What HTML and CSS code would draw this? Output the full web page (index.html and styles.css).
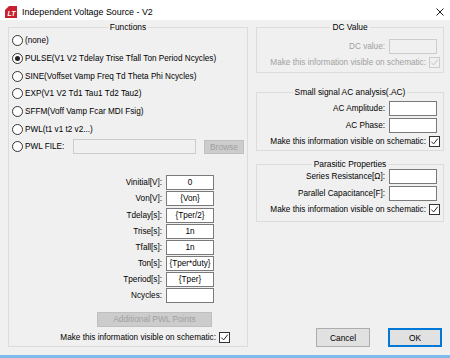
FILE: index.html
```html
<!DOCTYPE html>
<html lang="en">
<head>
    <meta charset="UTF-8">
    <title>Independent Voltage Source - V2</title>
    <link rel="stylesheet" href="styles.css">
</head>
<body>
    <div class="window">
        <div class="titlebar">
            <svg class="app-icon" viewBox="0 0 12 12">
                <polygon points="0,0 12,0 12,12 0,12" fill="#c9202f"/>
                <polygon points="0,0 4,0 0,4" fill="#ffffff"/>
                <text x="6.4" y="9.6" text-anchor="middle" class="icon-text">LT</text>
            </svg>
            <span class="title">Independent Voltage Source - V2</span>
            <svg class="close" viewBox="0 0 8 8">
                <path d="M0.5 0.5 L7.5 7.5 M7.5 0.5 L0.5 7.5" stroke="#000" stroke-width="0.9" fill="none"/>
            </svg>
        </div>

        <div class="content">
            <fieldset class="group functions">
                <legend align="center">Functions</legend>
                <div class="group-body">
                    <div class="options">
                        <div class="option"><span class="radio"></span>(none)</div>
                        <div class="option"><span class="radio on"></span>PULSE(V1 V2 Tdelay Trise Tfall Ton Period Ncycles)</div>
                        <div class="option"><span class="radio"></span>SINE(Voffset Vamp Freq Td Theta Phi Ncycles)</div>
                        <div class="option"><span class="radio"></span>EXP(V1 V2 Td1 Tau1 Td2 Tau2)</div>
                        <div class="option"><span class="radio"></span>SFFM(Voff Vamp Fcar MDI Fsig)</div>
                        <div class="option"><span class="radio"></span>PWL(t1 v1 t2 v2...)</div>
                        <div class="option">
                            <span class="radio"></span>
                            <span class="file-label">PWL FILE:</span>
                            <input class="text-input file-input" disabled>
                            <button class="btn browse" disabled>Browse</button>
                        </div>
                    </div>

                    <div class="params">
                        <div class="param"><label>Vinitial[V]:</label><input class="text-input" value="0"></div>
                        <div class="param"><label>Von[V]:</label><input class="text-input" value="{Von}"></div>
                        <div class="param"><label>Tdelay[s]:</label><input class="text-input" value="{Tper/2}"></div>
                        <div class="param"><label>Trise[s]:</label><input class="text-input" value="1n"></div>
                        <div class="param"><label>Tfall[s]:</label><input class="text-input" value="1n"></div>
                        <div class="param"><label>Ton[s]:</label><input class="text-input" value="{Tper*duty}"></div>
                        <div class="param"><label>Tperiod[s]:</label><input class="text-input" value="{Tper}"></div>
                        <div class="param"><label>Ncycles:</label><input class="text-input" value=""></div>
                    </div>

                    <button class="btn pwl-points" disabled>Additional PWL Points</button>

                    <div class="check-row left-check">
                        <span>Make this information visible on schematic:</span>
                        <span class="check"><svg viewBox="0 0 9 9"><path d="M1.3 4.6 L3.6 6.9 L7.8 1.6" stroke="#222" stroke-width="1" fill="none"/></svg></span>
                    </div>
                </div>
            </fieldset>

            <div class="side">
                <fieldset class="group dc">
                    <legend align="center">DC Value</legend>
                    <div class="group-body">
                        <div class="field first disabled-text"><label>DC value:</label><input class="text-input" disabled></div>
                        <div class="check-row disabled-text">
                            <span>Make this information visible on schematic:</span>
                            <span class="check off"><svg viewBox="0 0 9 9"><path d="M1.3 4.6 L3.6 6.9 L7.8 1.6" stroke="#c4c4c4" stroke-width="1" fill="none"/></svg></span>
                        </div>
                    </div>
                </fieldset>

                <fieldset class="group ac">
                    <legend align="center">Small signal AC analysis(.AC)</legend>
                    <div class="group-body">
                        <div class="field first"><label>AC Amplitude:</label><input class="text-input"></div>
                        <div class="field"><label>AC Phase:</label><input class="text-input"></div>
                        <div class="check-row">
                            <span>Make this information visible on schematic:</span>
                            <span class="check"><svg viewBox="0 0 9 9"><path d="M1.3 4.6 L3.6 6.9 L7.8 1.6" stroke="#222" stroke-width="1" fill="none"/></svg></span>
                        </div>
                    </div>
                </fieldset>

                <fieldset class="group parasitic">
                    <legend align="center">Parasitic Properties</legend>
                    <div class="group-body">
                        <div class="field"><label>Series Resistance[Ω]:</label><input class="text-input"></div>
                        <div class="field"><label>Parallel Capacitance[F]:</label><input class="text-input"></div>
                        <div class="check-row">
                            <span>Make this information visible on schematic:</span>
                            <span class="check"><svg viewBox="0 0 9 9"><path d="M1.3 4.6 L3.6 6.9 L7.8 1.6" stroke="#222" stroke-width="1" fill="none"/></svg></span>
                        </div>
                    </div>
                </fieldset>

                <div class="buttons">
                    <button class="btn">Cancel</button>
                    <button class="btn default">OK</button>
                </div>
            </div>
        </div>
    </div>
</body>
</html>
```

FILE: styles.css
```css
*{
    font-family: "Liberation Sans", Arial, sans-serif;
    margin: 0;
    padding: 0;
    box-sizing: border-box;
}
body {
    width: 450px;
    height: 358px;
    overflow: hidden;
    background-color: #f0f0f0;
    color: #000;
    font-size: 8.2px;
}
.window {
    display: flex;
    flex-direction: column;
    height: 358px;
    border-bottom: 3px solid #7cbbea;
}
.titlebar {
    height: 20px;
    background-color: #fff;
    display: flex;
    align-items: center;
    padding: 3px 6px 0 5px;
}
.app-icon {
    width: 12px;
    height: 12px;
    margin-right: 5px;
}
.icon-text {
    font-size: 7px;
    font-weight: bold;
    font-style: italic;
    fill: #fff;
}
.title {
    flex: 1;
    font-size: 8.9px;
}
.close {
    width: 8px;
    height: 8px;
}
.content {
    flex: 1;
    display: flex;
    gap: 8px;
    padding: 2px 0 8px 8px;
}

/* group boxes */
.group {
    border: 1px solid #dcdcdc;
    min-width: 0;
    margin: 0;
    padding: 0;
}
.group legend {
    margin: 0 auto;
    padding: 0 2px;
    line-height: 10px;
    font-size: 8.4px;
}
.group-body {
    display: flex;
    flex-direction: column;
}
.functions {
    width: 240px;
}
.side {
    width: 188px;
    display: flex;
    flex-direction: column;
}

/* radio list */
.options {
    padding-left: 3px;
}
.option {
    height: 17.67px;
    display: flex;
    align-items: center;
    white-space: nowrap;
}
.radio {
    width: 11px;
    height: 11px;
    border: 1px solid #333;
    border-radius: 50%;
    background-color: #fff;
    margin-right: 2px;
    display: flex;
    align-items: center;
    justify-content: center;
}
.radio.on::after {
    content: "";
    width: 5px;
    height: 5px;
    border-radius: 50%;
    background-color: #222;
}
.file-label {
    width: 48px;
}

/* inputs and buttons */
.text-input {
    width: 48px;
    height: 15px;
    border: 1px solid #7a7a7a;
    background-color: #fff;
    font-size: 8.2px;
    text-align: center;
    color: #000;
    outline: none;
}
.text-input:disabled {
    border-color: #cccccc;
    background-color: #f0f0f0;
}
.file-input {
    width: 123px;
}
.btn {
    height: 19px;
    width: 54px;
    font-size: 8.4px;
    background-color: #e1e1e1;
    border: 1px solid #adadad;
    color: #000;
}
.btn:disabled {
    background-color: #cccccc;
    border-color: #bfbfbf;
    color: #a0a0a0;
}
.btn.default {
    border: 2px solid #0078d7;
}
.browse {
    width: 40px;
    height: 14px;
    margin-left: 8px;
}
.pwl-points {
    width: 115px;
    height: 15px;
    margin: 8px 0 0 88px;
}

/* parameter table */
.params {
    margin-top: 19.2px;
    display: flex;
    flex-direction: column;
    align-items: flex-end;
    padding-right: 33px;
}
.param {
    height: 16.1px;
    display: flex;
    align-items: center;
    gap: 4px;
}

/* checkbox rows */
.check-row {
    height: 12px;
    display: flex;
    align-items: center;
    justify-content: flex-end;
    gap: 3px;
    margin-top: 2px;
    padding-right: 3px;
}
.left-check {
    margin-top: 5px;
    padding-right: 17px;
}
.check {
    width: 11px;
    height: 11px;
    border: 1px solid #333;
    background-color: #fff;
    display: flex;
}
.check svg {
    width: 9px;
    height: 9px;
}
.check.off {
    border-color: #cccccc;
    background-color: #f0f0f0;
}
.disabled-text {
    color: #a0a0a0;
}

/* right column fields */
.field {
    height: 15px;
    display: flex;
    align-items: center;
    justify-content: flex-end;
    gap: 4px;
    padding-right: 6px;
    margin-top: 2px;
}
.dc .group-body {
    padding-bottom: 4px;
}
.dc .field.first {
    margin-top: 7px;
}
.ac {
    margin-top: 14px;
}
.ac .group-body {
    padding-bottom: 3px;
}
.ac .field.first {
    margin-top: 4px;
}
.parasitic {
    margin-top: 8px;
}
.parasitic .group-body {
    padding-bottom: 6px;
}
.parasitic .field:first-child {
    margin-top: 0;
}
.buttons {
    margin-top: auto;
    display: flex;
    justify-content: flex-end;
    gap: 18px;
    padding-right: 2px;
}
```
